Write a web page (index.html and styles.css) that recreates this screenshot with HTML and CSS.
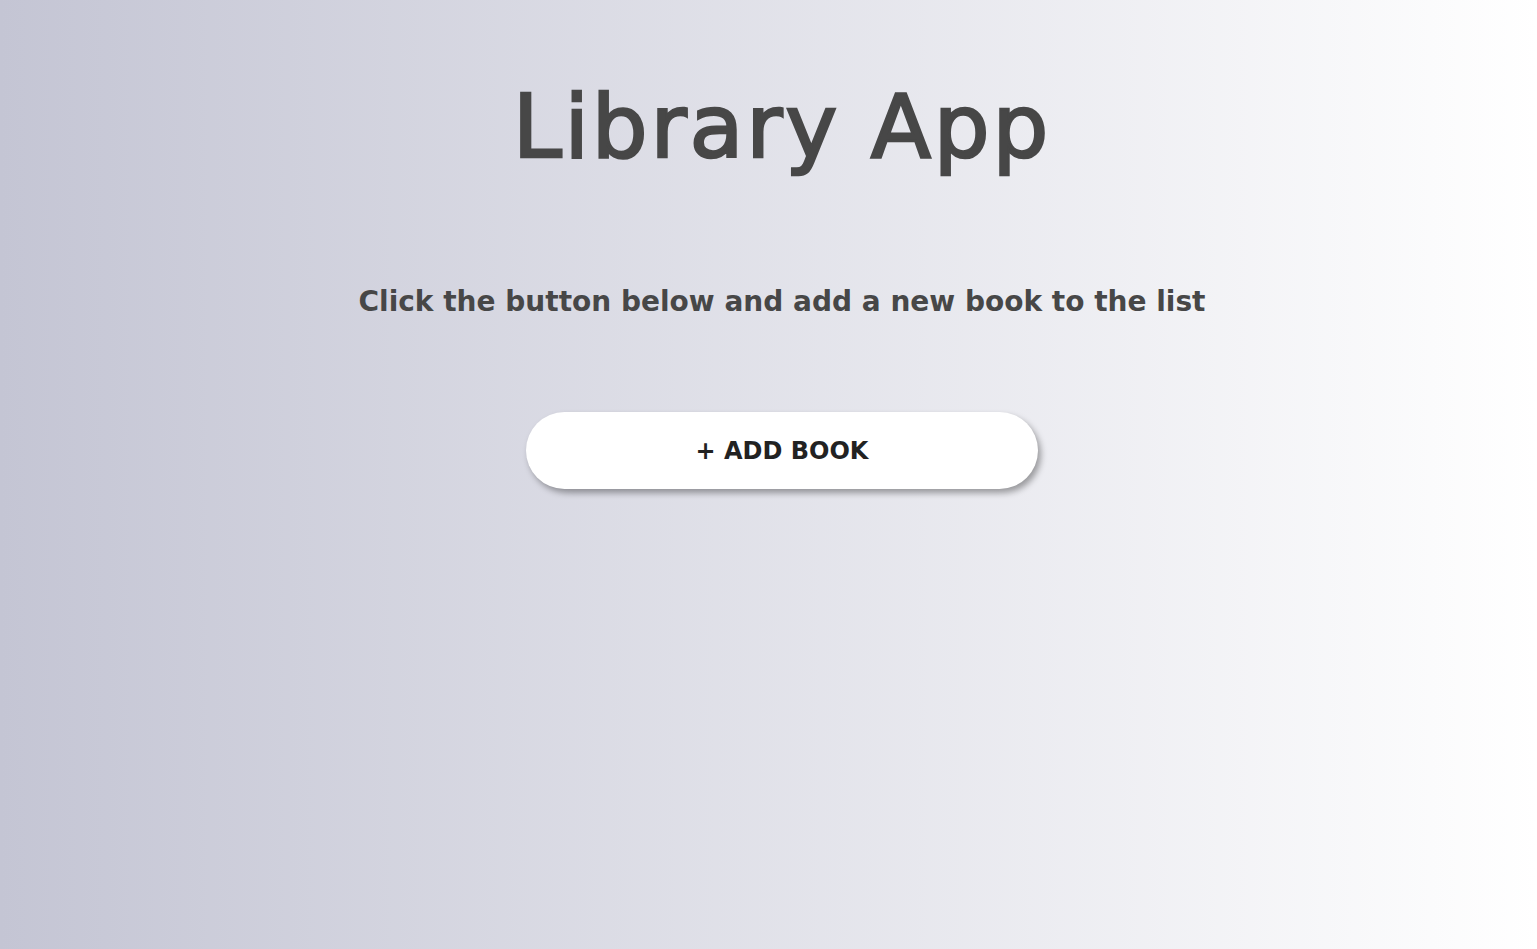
FILE: index.html
```html
<!DOCTYPE html>
<html lang="en">
<head>
<meta charset="utf-8">
<title>Library App</title>
<link rel="stylesheet" href="styles.css">
</head>
<body>
<main class="page">
  <h1 class="title">Library App</h1>
  <p class="subtitle">Click the button below and add a new book to the list</p>
  <button class="add-btn" type="button">+ ADD BOOK</button>
</main>
</body>
</html>
```

FILE: styles.css
```css
html, body {
  margin: 0;
  padding: 0;
  height: 100%;
}
body {
  background: linear-gradient(to right, #c4c5d4 0%, #ffffff 100%);
  font-family: "DejaVu Sans", "Liberation Sans", sans-serif;
  color: #474747;
}
.page {
  display: flex;
  flex-direction: column;
  align-items: center;
  padding-top: 72px;
  padding-left: 27px;
}
.title {
  margin: 0;
  font-size: 88px;
  font-weight: 500;
  line-height: 110px;
  letter-spacing: 2.8px;
  -webkit-text-stroke: 2.5px #474747;
}
.subtitle {
  margin: 100px 0 0;
  font-size: 28px;
  font-weight: 700;
  line-height: 40px;
}
.add-btn {
  margin-top: 90px;
  width: 512px;
  height: 77px;
  border: none;
  border-radius: 40px;
  background: #ffffff;
  color: #222222;
  font-family: inherit;
  font-size: 24px;
  font-weight: 700;
  box-shadow: 3px 4px 6px rgba(0, 0, 0, 0.35);
  cursor: pointer;
}
```
